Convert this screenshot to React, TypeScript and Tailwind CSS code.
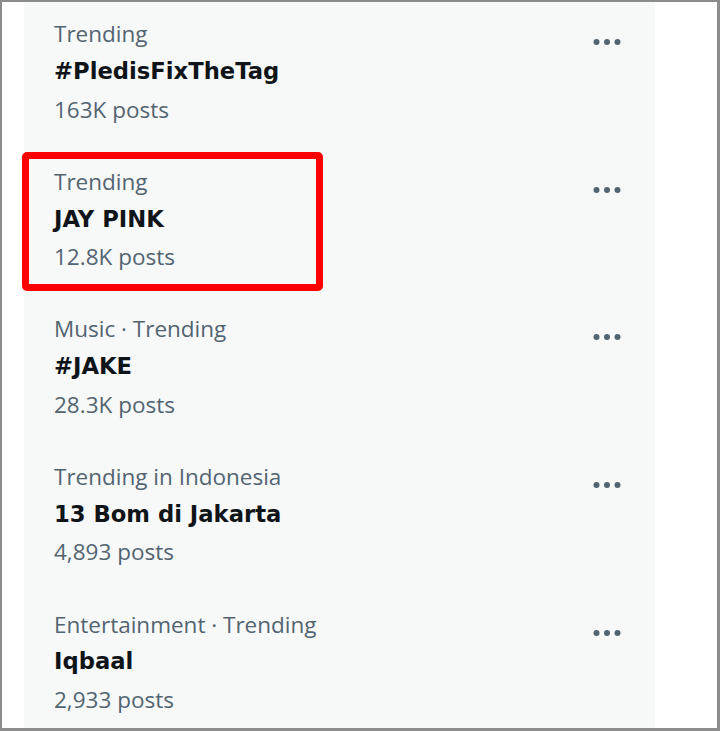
const trends = [
  { category: 'Trending', name: '#PledisFixTheTag', posts: '163K posts' },
  { category: 'Trending', name: 'JAY PINK', posts: '12.8K posts', marked: true },
  { category: 'Music · Trending', name: '#JAKE', posts: '28.3K posts' },
  { category: 'Trending in Indonesia', name: '13 Bom di Jakarta', posts: '4,893 posts' },
  { category: 'Entertainment · Trending', name: 'Iqbaal', posts: '2,933 posts' },
]

const MoreIcon = () => (
  <svg viewBox="0 0 24 24" className="w-[36px] h-[36px] fill-[#536471]">
    <circle cx="5" cy="12" r="2" />
    <circle cx="12" cy="12" r="2" />
    <circle cx="19" cy="12" r="2" />
  </svg>
)

const App = () => {
  return (
    <div
      className="w-[720px] h-[731px] overflow-hidden bg-white border-t-2 border-l-2 border-r-[3px] border-b-[3px] border-[#8c8c8c] flex pl-[22px]"
      style={{ fontFamily: '"Open Sans", "Noto Sans", sans-serif' }}
    >
      <div className="w-[631px] h-full bg-[#f7f9f9]">
        <div className="-mt-[4px]">
          {trends.map((t) => (
            <div key={t.name} className="relative flex justify-between pl-[30px] pr-[30px] py-[17.25px]">
              {/* red annotation box around the highlighted trend */}
              {t.marked && (
                <div className="absolute left-[-2px] top-[6px] w-[301px] h-[139px] border-[7px] border-[#ff0000] rounded-[5px]"></div>
              )}
              <div className="flex flex-col text-[22.5px] leading-[37.7px]">
                <span className="text-[#536471]">{t.category}</span>
                <span className="text-[#0f1419] font-bold text-[22.7px] font-['DejaVu_Sans',sans-serif]">{t.name}</span>
                <span className="text-[#536471]">{t.posts}</span>
              </div>
              <div className="mt-[9px]">
                <MoreIcon />
              </div>
            </div>
          ))}
        </div>
      </div>
    </div>
  )
}

export default App
